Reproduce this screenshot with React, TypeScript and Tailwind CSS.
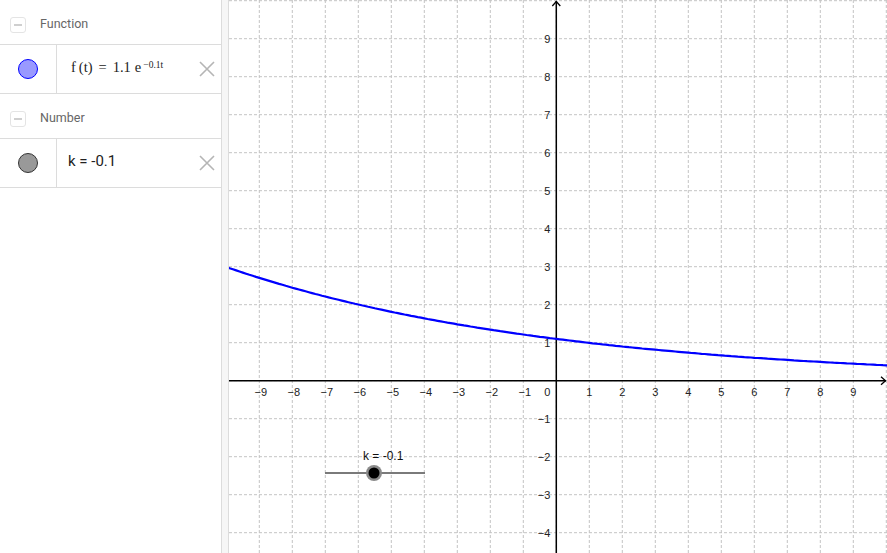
import React from 'react';

const OX = 327.3;
const OY = 380.7;
const UX = 33;
const UY = 38;
const W = 658;
const H = 553;

const sx = (t: number) => OX + t * UX;
const sy = (v: number) => OY - v * UY;

const minus = (n: number) => (n < 0 ? `\u2212${-n}` : `${n}`);

const CollapseIcon: React.FC = () => (
  <div className="flex h-[16px] w-[16px] items-center justify-center rounded-[3px] border border-[#e4e4e4]">
    <div className="h-[2px] w-[8px] bg-[#cfcfcf]" />
  </div>
);

const DeleteIcon: React.FC = () => (
  <svg aria-hidden="true" width="18" height="18" viewBox="0 0 18 18" className="text-[#b5b5b5]">
    <path d="M2 2 L16 16 M16 2 L2 16" stroke="currentColor" strokeWidth={1.6} />
  </svg>
);

const Header: React.FC<{ label: string }> = ({ label }) => (
  <div className="flex h-[45px] items-center border-b border-[#dcdcdc] pl-[10px] pt-[5px]">
    <CollapseIcon />
    <span className="ml-[14px] text-[12.5px] text-[#666]">{label}</span>
  </div>
);

const Item: React.FC<{ dot: string; children: React.ReactNode }> = ({ dot, children }) => (
  <div className="flex h-[49px] border-b border-[#dcdcdc]">
    <div className="flex w-[57px] items-center justify-center border-r border-[#dcdcdc]">
      <div className={`h-[20px] w-[20px] rounded-full ${dot}`} />
    </div>
    <div className="flex flex-1 items-center justify-between pr-[5px]">
      {children}
      <DeleteIcon />
    </div>
  </div>
);

const Graph: React.FC = () => {
  const vx: number[] = [];
  for (let i = -10; i <= 10; i++) vx.push(i);
  const hy: number[] = [];
  for (let j = -5; j <= 10; j++) hy.push(j);

  const pts: string[] = [];
  for (let t = -10.2; t <= 10.2; t += 0.1) {
    pts.push(`${sx(t).toFixed(1)},${sy(1.1 * Math.exp(-0.1 * t)).toFixed(1)}`);
  }

  return (
    <svg width={W} height={H} viewBox={`0 0 ${W} ${H}`} className="block" style={{ fontFamily: '"Liberation Sans", Arial, sans-serif' }}>
      {vx.map((i) => (
        <line key={`v${i}`} x1={sx(i)} y1={0} x2={sx(i)} y2={H} stroke="#c4c4c4" strokeWidth={1} strokeDasharray="3 2" />
      ))}
      {hy.map((j) => (
        <line key={`h${j}`} x1={0} y1={sy(j)} x2={W} y2={sy(j)} stroke="#c4c4c4" strokeWidth={1} strokeDasharray="3 2" />
      ))}

      {/* axes */}
      <line x1={0} y1={OY} x2={W - 1} y2={OY} stroke="#000" strokeWidth={1.5} />
      <line x1={OX} y1={H} x2={OX} y2={1} stroke="#000" strokeWidth={1.5} />
      <path d={`M${W - 6} ${OY - 4} L${W - 1.5} ${OY} L${W - 6} ${OY + 4}`} fill="none" stroke="#000" strokeWidth={1.3} />
      <path d={`M${OX - 4} 6 L${OX} 1.5 L${OX + 4} 6`} fill="none" stroke="#000" strokeWidth={1.3} />

      {/* x labels */}
      {vx
        .filter((i) => i !== 0 && i > -10 && i < 10)
        .map((i) => (
          <text key={`xl${i}`} x={sx(i) + (i < 0 ? 1.5 : 0)} y={OY + 15} fontSize={11} fill="#222" textAnchor="middle">
            {minus(i)}
          </text>
        ))}
      <text x={OX - 6} y={OY + 15} fontSize={11} fill="#222" textAnchor="end">
        0
      </text>

      {/* y labels */}
      {hy
        .filter((j) => j !== 0 && j >= -4 && j <= 9)
        .map((j) => (
          <text key={`yl${j}`} x={OX - 6} y={sy(j) + 4} fontSize={11} fill="#222" textAnchor="end">
            {minus(j)}
          </text>
        ))}

      {/* function */}
      <polyline points={pts.join(' ')} fill="none" stroke="#0000ff" strokeWidth={2.2} />

      {/* slider k */}
      <line x1={96} y1={473} x2={196} y2={473} stroke="#7a7a7a" strokeWidth={2} />
      <circle cx={145} cy={473} r={8} fill="#8a8a8a" />
      <circle cx={145} cy={473} r={5.5} fill="#000" />
      <text x={134} y={460} fontSize={12} fill="#111">
        k = -0.1
      </text>
    </svg>
  );
};

export default function App() {
  return (
    <div className="flex h-[553px] w-[887px] overflow-hidden bg-white" style={{ fontFamily: 'Roboto, "Liberation Sans", sans-serif' }}>
      <div className="w-[222px] shrink-0 border-r border-[#dcdcdc]">
        <Header label="Function" />
        <Item dot="bg-[#9999ff] border border-[#0000ff]">
          <span className="ml-[14px] pb-[3px] text-[14.5px] text-[#222]" style={{ fontFamily: '"Liberation Serif", "DejaVu Serif", serif' }}>
            f<span className="ml-[3px]">(t)</span>
            <span className="mx-[6px]">=</span>
            1.1<span className="ml-[4px]">e</span>
            <sup className="relative -top-[4px] ml-[2px] text-[9.5px]">−0.1t</sup>
          </span>
        </Item>
        <Header label="Number" />
        <Item dot="bg-[#999999] border border-[#333333]">
          <span className="ml-[11px] pb-[3px] text-[15px] text-[#222]">k = -0.1</span>
        </Item>
      </div>
      <div className="w-[7px] shrink-0 border-r border-[#dcdcdc] bg-[#f6f6f6]" />
      <div className="flex-1">
        <Graph />
      </div>
    </div>
  );
}
